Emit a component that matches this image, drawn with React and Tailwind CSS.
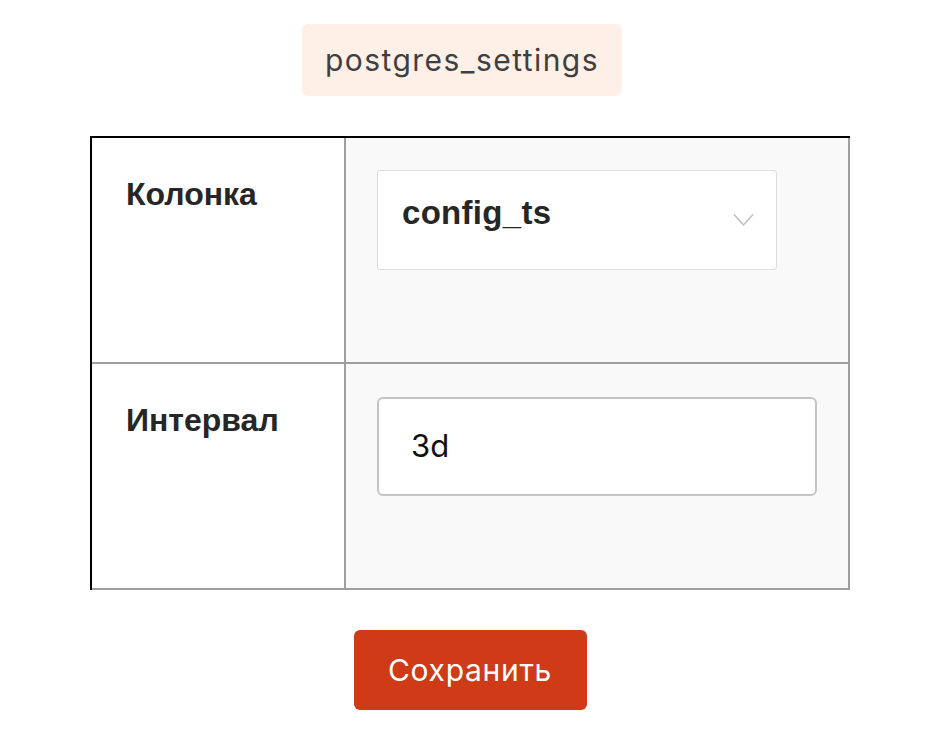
export default function App() {
  return (
    <div className="min-h-screen bg-white flex flex-col items-center pt-6 pl-1 font-['Inter',sans-serif]">
      {/* Заголовок */}
      <div className="h-[72px] px-[23px] mr-4 flex items-center rounded-md bg-[#fff0e7] text-[30px] tracking-[1.45px] text-[#3f3f3f]">
        postgres_settings
      </div>

      {/* Таблица настроек */}
      <div className="mt-10 w-[760px] border-t-2 border-l-2 border-black grid grid-cols-[254px_504px]">
        <div className="h-[226px] border-r-2 border-b-2 border-[#9e9e9e] bg-white pl-[34px] pt-[40px]">
          <span className="font-['Liberation_Sans',sans-serif] font-bold text-[32px] leading-none text-[#262626]">Колонка</span>
        </div>
        <div className="h-[226px] border-r-2 border-b-2 border-[#9e9e9e] bg-[#f9f9f9] pl-[31px] pt-[32px]">
          <div className="w-[400px] h-[100px] rounded-[3px] border border-[#dcdcdc] bg-white flex items-start justify-between pl-6 pr-[22px] pt-[25px]">
            <span className="font-['Liberation_Sans',sans-serif] font-bold text-[33px] tracking-[0.3px] leading-none text-[#262626]">config_ts</span>
            <svg width="21" height="14" viewBox="0 0 21 14" fill="none" className="mt-[17px]">
              <path d="M1 1.5L10.5 12L20 1.5" stroke="#bdbdbd" strokeWidth="1.5" />
            </svg>
          </div>
        </div>

        <div className="h-[226px] border-r-2 border-b-2 border-[#9e9e9e] bg-white pl-[34px] pt-[40px]">
          <span className="font-['Liberation_Sans',sans-serif] font-bold text-[32px] leading-none text-[#262626]">Интервал</span>
        </div>
        <div className="h-[226px] border-r-2 border-b-2 border-[#9e9e9e] bg-[#f9f9f9] pl-[31px] pt-[33px]">
          <div className="w-[440px] h-[99px] rounded-md border-2 border-[#c4c4c4] bg-white flex items-center pl-[32px]">
            <span className="text-[31px] text-[#111]">3d</span>
          </div>
        </div>
      </div>

      <button className="mt-10 w-[233px] h-[80px] rounded-md bg-[#cf3b17] text-white text-[30px] tracking-[0.7px]">
        Сохранить
      </button>
    </div>
  );
}
